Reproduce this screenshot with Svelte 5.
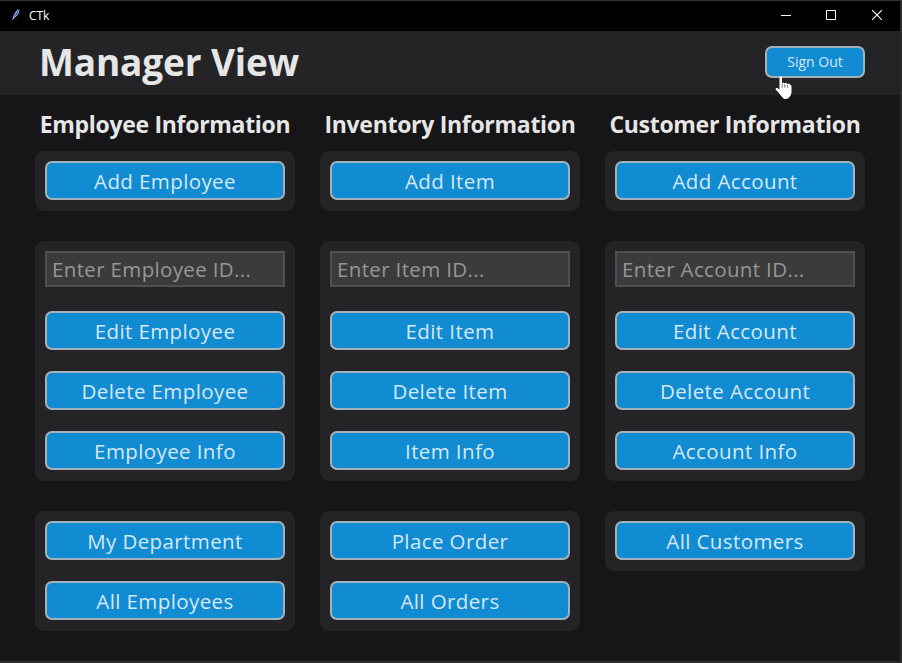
<script>
  const columns = [
    {
      title: 'Employee Information',
      add: 'Add Employee',
      placeholder: 'Enter Employee ID...',
      actions: ['Edit Employee', 'Delete Employee', 'Employee Info'],
      lists: ['My Department', 'All Employees']
    },
    {
      title: 'Inventory Information',
      add: 'Add Item',
      placeholder: 'Enter Item ID...',
      actions: ['Edit Item', 'Delete Item', 'Item Info'],
      lists: ['Place Order', 'All Orders']
    },
    {
      title: 'Customer Information',
      add: 'Add Account',
      placeholder: 'Enter Account ID...',
      actions: ['Edit Account', 'Delete Account', 'Account Info'],
      lists: ['All Customers']
    }
  ];
</script>

<div class="window">
  <div class="titlebar">
    <svg class="feather" width="10" height="13" viewBox="0 0 10 13">
      <path d="M2 11.5 2.3 8 4.3 3.7 7.4 1 7.8 3.5 6.5 7 4 9.4Z" fill="#275a9e" />
      <path d="M1.7 12 3 8 6.8 1.7M3.5 9.5 6.8 6.5 8 2" fill="none" stroke="#a8caf0" stroke-width=".9" />
    </svg>
    <span class="app-name">CTk</span>
    <div class="controls">
      <svg width="10" height="10" viewBox="0 0 10 10"><path d="M0 5.5H10" stroke="#fff" /></svg>
      <svg width="10" height="10" viewBox="0 0 10 10"><path d="M.5 .5h9v9h-9z" fill="none" stroke="#fff" /></svg>
      <svg width="10" height="10" viewBox="0 0 10 10"><path d="M0 0 10 10M10 0 0 10" stroke="#fff" stroke-width="1.1" /></svg>
    </div>
  </div>

  <header>
    <h1>Manager View</h1>
    <button class="signout">Sign Out</button>
    <svg class="cursor" width="18" height="24" viewBox="0 0 18 24">
      <path d="M4.5 1.6C4.5.2 7 .2 7 1.6V7.2c.4-.8 2.4-.8 2.6.3.5-.8 2.5-.6 2.7.5.6-.7 3-.4 3 1.1.9 0 1.2.5 1.2 1.5v5.4c0 2-.6 3.3-1.6 4.6C13.6 22.4 12.2 23 10.8 23c-1.8 0-3-.8-3.9-2.3C4.8 18 3.500 16 .9 13.900c-1-1.500.8-2.700 2.200-1.500l1.400 1.200Z" fill="#fff" />
      <path d="M7.2 7.800v3.900M9.800 8.400v3.300M12.500 9v2.700" stroke="#333" stroke-width=".7" />
    </svg>
  </header>

  <main>
    {#each columns as col}
      <section>
        <h2>{col.title}</h2>
        <div class="card"><button>{col.add}</button></div>
        <div class="card">
          <input placeholder={col.placeholder} />
          {#each col.actions as label}<button>{label}</button>{/each}
        </div>
        <div class="card">
          {#each col.lists as label}<button>{label}</button>{/each}
        </div>
      </section>
    {/each}
  </main>
</div>

<style>
  .window {
    box-sizing: border-box;
    width: 902px;
    height: 663px;
    display: flex;
    flex-direction: column;
    background: #161618;
    border-top: 1px solid #323232;
    border-right: 2px solid #2b2b2a;
    border-bottom: 2px solid #2b2b2a;
    font-family: "Open Sans", "Noto Sans", sans-serif;
    overflow: hidden;
  }
  .titlebar {
    height: 30px;
    flex: none;
    display: flex;
    align-items: center;
    background: #000;
    color: #fff;
    padding-left: 11px;
  }
  .feather { margin-top: -4px; }
  .app-name {
    margin: -2px 0 0 8px;
    font: 12px "Open Sans", sans-serif;
    letter-spacing: -0.1px;
  }
  .controls {
    margin-left: auto;
    display: flex;
    gap: 35px;
    padding-right: 18px;
    margin-top: -3px;
  }
  .controls svg { display: block; }
  .controls svg:not(:last-child) { position: relative; left: -1px; }
  header {
    position: relative;
    height: 64px;
    flex: none;
    box-sizing: border-box;
    display: flex;
    align-items: center;
    justify-content: space-between;
    padding: 0 35px 2px 39px;
    background: #242426;
  }
  h1 {
    margin: 0;
    padding-bottom: 1px;
    font-size: 37px;
    line-height: 48px;
    font-weight: 700;
    color: #e6e6e6;
    letter-spacing: -0.15px;
    white-space: nowrap;
  }
  button {
    box-sizing: border-box;
    display: block;
    width: 240px;
    height: 39px;
    margin: 0;
    padding: 1px 0 0;
    border: 2px solid #a5b1b9;
    border-radius: 7px;
    background: #118bd2;
    color: #d6e8f4;
    font: 20.5px "Open Sans", "Noto Sans", sans-serif;
    letter-spacing: 0.4px;
    white-space: nowrap;
  }
  .signout {
    width: 100px;
    height: 32px;
    padding: 0 0 2px;
    font-size: 14px;
    letter-spacing: 0;
  }
  .cursor {
    position: absolute;
    left: 775px;
    top: 45px;
  }
  main {
    display: flex;
    gap: 25px;
    padding-left: 35px;
  }
  section { width: 260px; }
  h2 {
    margin: 0;
    height: 56px;
    line-height: 58px;
    text-align: center;
    font-size: 23px;
    font-weight: 700;
    color: #e6e6e6;
    letter-spacing: -0.3px;
    white-space: nowrap;
  }
  .card {
    box-sizing: border-box;
    width: 260px;
    padding: 10px 10px 11px;
    margin-bottom: 30px;
    border-radius: 9px;
    background: #242426;
    display: flex;
    flex-direction: column;
    gap: 21px;
  }
  input {
    box-sizing: border-box;
    width: 240px;
    height: 36px;
    margin: 0 0 3px;
    padding: 0 5px;
    border: 2px solid #505050;
    border-radius: 0;
    background: #3b3b3b;
    font: 20.5px "Open Sans", "Noto Sans", sans-serif;
    letter-spacing: 0.35px;
  }
  input::placeholder { color: #969696; opacity: 1; }
</style>
